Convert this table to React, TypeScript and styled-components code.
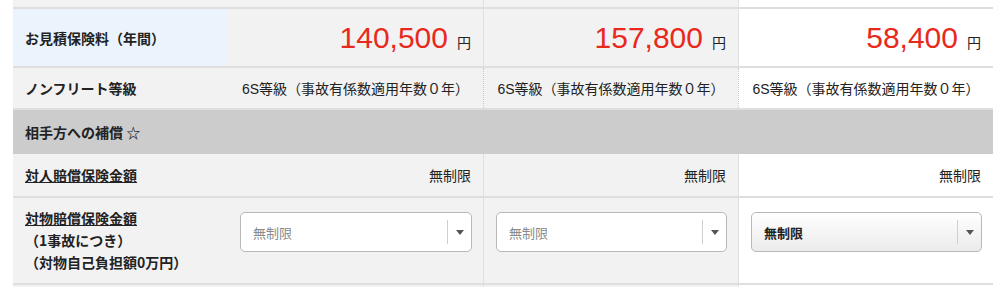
import React from 'react';
import styled, { createGlobalStyle } from 'styled-components';

const GlobalStyle = createGlobalStyle`
  html, body {
    margin: 0;
    padding: 0;
    background: #fff;
  }
  body {
    font-family: "Liberation Sans", "Noto Sans CJK JP", sans-serif;
    color: #222;
  }
`;

const Table = styled.div`
  width: 980px;
  margin-left: 13px;
`;

const Row = styled.div<{ $height: number; $border?: boolean }>`
  display: grid;
  grid-template-columns: 215px 255px 255px 255px;
  height: ${(p) => p.$height}px;
  border-bottom: ${(p) => (p.$border === false ? 'none' : '2px solid #dedede')};
`;

const LabelCell = styled.div<{ $bg?: string; $top?: boolean }>`
  display: flex;
  flex-direction: column;
  justify-content: ${(p) => (p.$top ? 'flex-start' : 'center')};
  padding: ${(p) => (p.$top ? '9px 0 0 12px' : '0 0 0 12px')};
  background: ${(p) => p.$bg || '#f2f2f2'};
  font-family: "Noto Sans CJK JP", sans-serif;
  font-size: 14px;
  font-weight: 700;
  line-height: 22px;
  color: #222;
`;

const LabelLink = styled.span`
  text-decoration: underline;
`;

const ValueCell = styled.div<{
  $selected?: boolean;
  $divider?: 'solid' | 'dotted' | 'none';
  $align?: 'center' | 'flex-end';
  $top?: boolean;
}>`
  display: flex;
  justify-content: ${(p) => p.$align || 'flex-end'};
  align-items: ${(p) => (p.$top ? 'flex-start' : 'center')};
  padding: ${(p) => (p.$top ? '14px 11px 0 12px' : '0 12px')};
  background: ${(p) => (p.$selected ? '#ffffff' : '#f2f2f2')};
  border-left: ${(p) =>
    p.$divider === 'dotted'
      ? '1px dotted #c8c8c8'
      : p.$divider === 'solid'
        ? '1px solid #e0e0e0'
        : 'none'};
  font-family: "Liberation Sans", "Noto Sans CJK JP", sans-serif;
  font-size: 14px;
  color: #222;
`;

const Price = styled.div`
  display: flex;
  align-items: baseline;
  margin-top: 1px;
`;

const Amount = styled.span`
  font-family: "Liberation Sans", sans-serif;
  font-size: 30px;
  color: #e8291c;
`;

const Yen = styled.span`
  font-family: "Noto Sans CJK JP", sans-serif;
  font-size: 14px;
  margin-left: 9px;
  color: #222;
`;

const SectionHeader = styled.div`
  display: flex;
  align-items: center;
  height: 44px;
  padding-left: 12px;
  background: #cccccc;
  font-family: "Noto Sans CJK JP", sans-serif;
  font-size: 14px;
  font-weight: 700;
  color: #222;
`;

const SelectBox = styled.div<{ $filled?: boolean }>`
  display: flex;
  align-items: center;
  width: 100%;
  height: 40px;
  box-sizing: border-box;
  padding-left: 12px;
  border: 1px solid #b8b8b8;
  border-radius: 5px;
  background: ${(p) => (p.$filled ? 'linear-gradient(#ffffff, #ebebeb)' : '#ffffff')};
  font-family: "Noto Sans CJK JP", sans-serif;
  font-size: 13px;
  font-weight: ${(p) => (p.$filled ? 700 : 400)};
  color: ${(p) => (p.$filled ? '#222' : '#8a8a8a')};
`;

const SelectDivider = styled.span`
  margin-left: auto;
  width: 1px;
  height: 24px;
  background: #cfcfcf;
`;

const SelectArrow = styled.span`
  display: flex;
  align-items: center;
  justify-content: center;
  width: 23px;
  &::after {
    content: '';
    border-left: 4px solid transparent;
    border-right: 4px solid transparent;
    border-top: 5px solid #555;
  }
`;

const plans = [
  { price: '140,500', selected: false },
  { price: '157,800', selected: false },
  { price: '58,400', selected: true },
];

const divider = (i: number): 'solid' | 'none' => (i === 0 ? 'none' : 'solid');

function Select({ value, filled }: { value: string; filled?: boolean }) {
  return (
    <SelectBox $filled={filled}>
      {value}
      <SelectDivider />
      <SelectArrow />
    </SelectBox>
  );
}

export default function App() {
  return (
    <>
      <GlobalStyle />
      <Table>
        <Row $height={7}>
          <LabelCell />
          {plans.map((p, i) => (
            <ValueCell key={i} $selected={p.selected} $divider={divider(i)} />
          ))}
        </Row>
        <Row $height={57}>
          <LabelCell $bg="#ebf4fd">お見積保険料（年間）</LabelCell>
          {plans.map((p, i) => (
            <ValueCell key={i} $selected={p.selected} $divider={divider(i)}>
              <Price>
                <Amount>{p.price}</Amount>
                <Yen>円</Yen>
              </Price>
            </ValueCell>
          ))}
        </Row>
        <Row $height={40}>
          <LabelCell>ノンフリート等級</LabelCell>
          {plans.map((p, i) => (
            <ValueCell
              key={i}
              $selected={p.selected}
              $divider={i === 0 ? 'none' : 'dotted'}
              $align="center"
            >
              6S等級（事故有係数適用年数０年）
            </ValueCell>
          ))}
        </Row>
        <SectionHeader>相手方への補償 ☆</SectionHeader>
        <Row $height={42}>
          <LabelCell>
            <LabelLink>対人賠償保険金額</LabelLink>
          </LabelCell>
          {plans.map((p, i) => (
            <ValueCell key={i} $selected={p.selected} $divider={divider(i)}>
              無制限
            </ValueCell>
          ))}
        </Row>
        <Row $height={85}>
          <LabelCell $top>
            <LabelLink>対物賠償保険金額</LabelLink>
            <span>（1事故につき）</span>
            <span>（対物自己負担額0万円）</span>
          </LabelCell>
          {plans.map((p, i) => (
            <ValueCell key={i} $selected={p.selected} $divider={divider(i)} $top>
              <Select value="無制限" filled={p.selected} />
            </ValueCell>
          ))}
        </Row>
        <Row $height={10} $border={false}>
          <LabelCell />
          {plans.map((p, i) => (
            <ValueCell key={i} $selected={p.selected} $divider={divider(i)} />
          ))}
        </Row>
      </Table>
    </>
  );
}
